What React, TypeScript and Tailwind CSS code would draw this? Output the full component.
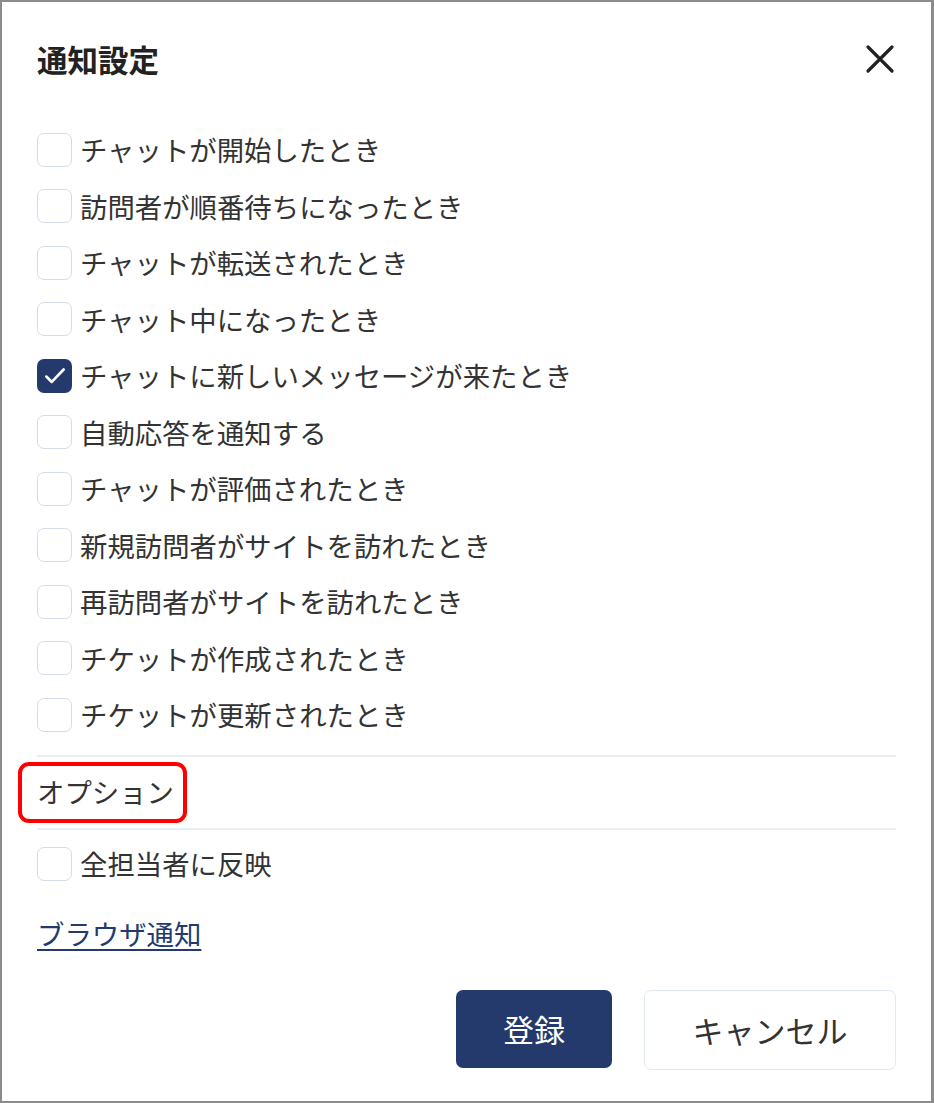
import React, { useState } from "react";

const ITEMS = [
  "チャットが開始したとき",
  "訪問者が順番待ちになったとき",
  "チャットが転送されたとき",
  "チャット中になったとき",
  "チャットに新しいメッセージが来たとき",
  "自動応答を通知する",
  "チャットが評価されたとき",
  "新規訪問者がサイトを訪れたとき",
  "再訪問者がサイトを訪れたとき",
  "チケットが作成されたとき",
  "チケットが更新されたとき",
];

const CheckRow = ({ label, checked, onToggle }: { label: string; checked: boolean; onToggle: () => void }) => (
  <label className="flex h-[56.5px] items-center gap-[8px] cursor-pointer" onClick={onToggle}>
    <span
      className={
        checked
          ? "flex h-[34px] w-[35px] shrink-0 items-center justify-center rounded-[7px] bg-[#253a6c]"
          : "h-[34px] w-[35px] shrink-0 rounded-[7px] border-[1.5px] border-[#d3dcef] bg-white"
      }
    >
      {checked && (
        <svg width="26" height="26" viewBox="0 0 24 24" fill="none" stroke="white" strokeWidth="2.4" strokeLinecap="round" strokeLinejoin="round">
          <path d="M4 12.5l5 5L20 6" />
        </svg>
      )}
    </span>
    <span className="text-[27.4px] leading-none text-[#333333]">{label}</span>
  </label>
);

export default function App() {
  const [checked, setChecked] = useState<boolean[]>(ITEMS.map((_, i) => i === 4));
  const [all, setAll] = useState(false);

  return (
    <div
      className="relative h-[1103px] w-[934px] border-2 border-r-[3px] border-[#8c8c8c] bg-white px-[35px] pt-[37px] pb-[31px]"
      style={{ fontFamily: '"Noto Sans CJK JP", "Noto Sans", sans-serif' }}
    >
      <div className="flex items-center justify-between">
        <h1 className="text-[30.5px] font-bold leading-[40px] text-[#222222]">通知設定</h1>
        <button className="mr-[1px] text-[#222222]">
          <svg width="30" height="30" viewBox="0 0 30 30" fill="none" stroke="currentColor" strokeWidth="3.2" strokeLinecap="round">
            <path d="M3 3l24 24M27 3L3 27" />
          </svg>
        </button>
      </div>

      <div className="mt-[42.5px] flex flex-col">
        {ITEMS.map((item, i) => (
          <CheckRow
            key={item}
            label={item}
            checked={checked[i]}
            onToggle={() => setChecked((prev) => prev.map((v, j) => (j === i ? !v : v)))}
          />
        ))}
      </div>

      <div className="mt-[11.5px] border-t-2 border-[#e9edf7]" />
      <div className="relative flex h-[71px] items-center">
        <span className="text-[27.4px] leading-none text-[#333333]">オプション</span>
        {/* annotation */}
        <div className="absolute left-[-19px] top-[5px] h-[61px] w-[169px] rounded-[11px] border-4 border-[#ff0000]" />
      </div>
      <div className="border-t-2 border-[#e9edf7]" />

      <div className="mt-[6px]">
        <CheckRow label="全担当者に反映" checked={all} onToggle={() => setAll((v) => !v)} />
      </div>

      <div className="mt-[28px]">
        <a href="#" className="text-[27.4px] leading-none text-[#233a6e] underline underline-offset-[4px]">
          ブラウザ通知
        </a>
      </div>

      <div className="mt-[40px] flex justify-end gap-[32px]">
        <button className="h-[78px] w-[156px] rounded-[7px] bg-[#253a6c] text-[31px] text-white">登録</button>
        <button className="h-[80px] w-[252px] rounded-[7px] border-[1.5px] border-[#e1e8f6] bg-white text-[31px] text-[#333333]">
          キャンセル
        </button>
      </div>
    </div>
  );
}
